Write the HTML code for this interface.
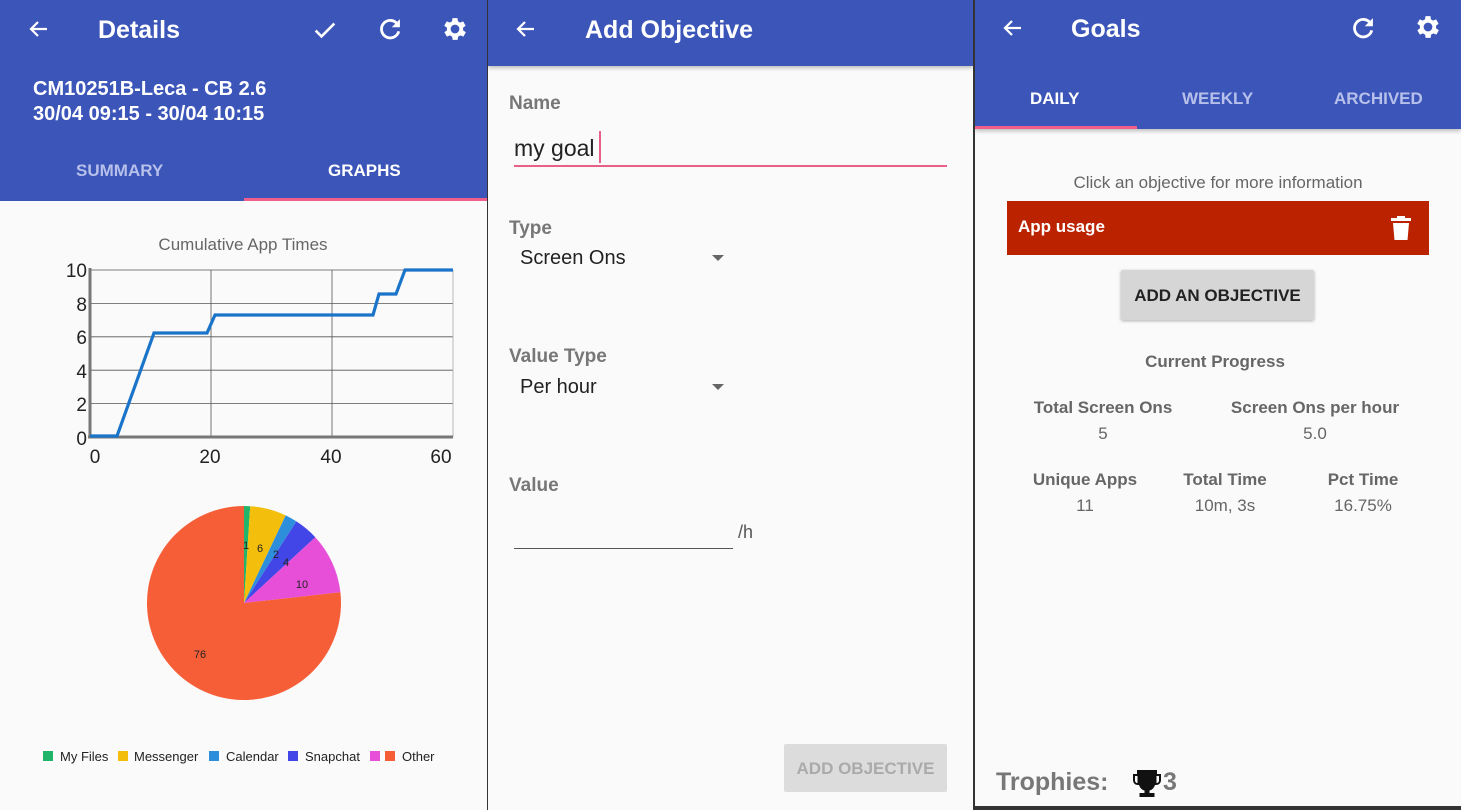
<!DOCTYPE html>
<html><head><meta charset="utf-8"><style>
*{margin:0;padding:0;box-sizing:border-box}
body{width:1461px;height:810px;background:#333;font-family:"Liberation Sans",Roboto,sans-serif;position:relative;overflow:hidden}
.p{position:absolute;top:0;height:810px;background:#fafafa;overflow:hidden}
.hd{position:absolute;left:0;right:0;top:0;background:#3c55b9;color:#fff}
.a{position:absolute}
.t{position:absolute;font-weight:bold;white-space:nowrap}
</style></head><body>

<!-- Panel 1 -->
<div class="p" style="left:0;width:487px">
 <div class="hd" style="height:201px">
  <svg class="a" style="left:26px;top:17px" width="26" height="24" viewBox="0 0 24 24"><path d="M20 12H5M11 5l-7 7 7 7" stroke="#fff" stroke-width="2.2" fill="none"/></svg>
  <div class="t" style="left:98px;top:16px;font-size:25px">Details</div>
  <svg class="a" style="left:311px;top:16px" width="28" height="28" viewBox="0 0 24 24"><path d="M4 12.5l5 5L20 6.5" stroke="#fff" stroke-width="2.2" fill="none"/></svg>
  <svg class="a" style="left:376px;top:15px" width="28" height="28" viewBox="0 0 24 24"><path d="M18.5 8A7.5 7.5 0 1 0 19.5 14" stroke="#fff" stroke-width="2.4" fill="none"/><path d="M20.5 3.5v7h-7z" fill="#fff"/></svg>
  <svg class="a" style="left:440px;top:14px" width="30" height="30" viewBox="0 0 24 24"><path fill="#fff" d="M19.4 13a7.5 7.5 0 0 0 0-2l2.1-1.6-2-3.5-2.5 1a7 7 0 0 0-1.7-1L15 3.3h-4l-.4 2.6a7 7 0 0 0-1.7 1l-2.5-1-2 3.5L6.6 11a7.5 7.5 0 0 0 0 2l-2.1 1.6 2 3.5 2.5-1a7 7 0 0 0 1.7 1l.4 2.6h4l.4-2.6a7 7 0 0 0 1.7-1l2.5 1 2-3.5zM13 15.5a3.5 3.5 0 1 1 0-7 3.5 3.5 0 0 1 0 7z" transform="translate(-1 0)"/></svg>
  <div class="t" style="left:33px;top:77px;font-size:20px;line-height:25px">CM10251B-Leca - CB 2.6<br>30/04 09:15 - 30/04 10:15</div>
  <div class="t" style="left:76px;top:161px;font-size:17px;color:#b6c0ea">SUMMARY</div>
  <div class="t" style="left:328px;top:161px;font-size:17px">GRAPHS</div>
  <div class="a" style="left:244px;top:198px;width:243px;height:3px;background:#ef5f8a"></div>
 </div>
 <svg class="a" style="left:0;top:201px" width="487" height="609">
  <g transform="translate(0,-201)" font-family="Liberation Sans, sans-serif">
   <text x="243" y="250" font-size="17" fill="#666" text-anchor="middle">Cumulative App Times</text>
   <g stroke="#555" stroke-width="0.8">
    <line x1="90" y1="270" x2="453" y2="270"/><line x1="90" y1="303.4" x2="453" y2="303.4"/><line x1="90" y1="336.8" x2="453" y2="336.8"/><line x1="90" y1="370.2" x2="453" y2="370.2"/><line x1="90" y1="403.6" x2="453" y2="403.6"/>
    <line x1="211" y1="270" x2="211" y2="437"/><line x1="332" y1="270" x2="332" y2="437"/><line x1="453" y1="270" x2="453" y2="437" stroke="#aaa"/>
   </g>
   <line x1="90" y1="268" x2="90" y2="438" stroke="#777" stroke-width="3"/>
   <line x1="88" y1="437" x2="453" y2="437" stroke="#777" stroke-width="3"/>
   <polyline points="90,436 117,436 154,333 207,333 215,315 373,315 379,294 396,294 405,270 453,270" fill="none" stroke="#1a74c9" stroke-width="3.2"/>
   <g font-size="19" fill="#222" text-anchor="end">
    <text x="87" y="277">10</text><text x="87" y="311">8</text><text x="87" y="344">6</text><text x="87" y="378">4</text><text x="87" y="411">2</text><text x="87" y="445">0</text>
   </g>
   <g font-size="19" fill="#222" text-anchor="middle">
    <text x="95" y="463">0</text><text x="210" y="463">20</text><text x="331" y="463">40</text><text x="441" y="463">60</text>
   </g>
   <path d="M244 603L244 506A97 97 0 0 1 250.2 506.2Z" fill="#20b56b"/>
   <path d="M244 603L250.2 506.2A97 97 0 0 1 285.7 515.4Z" fill="#f4bf0c"/>
   <path d="M244 603L285.7 515.4A97 97 0 0 1 296.4 521.4Z" fill="#2d8fdc"/>
   <path d="M244 603L296.4 521.4A97 97 0 0 1 315.3 537.2Z" fill="#4246e6"/>
   <path d="M244 603L315.3 537.2A97 97 0 0 1 340.4 592.3Z" fill="#e84fd8"/>
   <path d="M244 603L340.4 592.3A97 97 0 1 1 244 506Z" fill="#f65e38"/>
   <g font-size="11" fill="#222" text-anchor="middle">
    <text x="246" y="549">1</text><text x="260" y="552">6</text><text x="276" y="558">2</text><text x="286" y="566">4</text><text x="302" y="588">10</text><text x="200" y="658">76</text>
   </g>
   <g font-size="13" fill="#222">
    <rect x="43" y="751" width="10" height="10" fill="#20b56b"/><text x="60" y="761">My Files</text>
    <rect x="118" y="751" width="10" height="10" fill="#f4bf0c"/><text x="134" y="761">Messenger</text>
    <rect x="209" y="751" width="10" height="10" fill="#2d8fdc"/><text x="226" y="761">Calendar</text>
    <rect x="288" y="751" width="10" height="10" fill="#4246e6"/><text x="305" y="761">Snapchat</text>
    <rect x="370" y="751" width="10" height="10" fill="#e84fd8"/>
    <rect x="385" y="751" width="10" height="10" fill="#f65e38"/><text x="402" y="761">Other</text>
   </g>
  </g>
 </svg>
</div>

<!-- Panel 2 -->
<div class="p" style="left:488px;width:485px">
 <div class="hd" style="height:66px;box-shadow:0 2px 4px rgba(0,0,0,.25)">
  <svg class="a" style="left:25px;top:17px" width="26" height="24" viewBox="0 0 24 24"><path d="M20 12H5M11 5l-7 7 7 7" stroke="#fff" stroke-width="2.2" fill="none"/></svg>
  <div class="t" style="left:97px;top:16px;font-size:25px">Add Objective</div>
 </div>
 <div class="t" style="left:21px;top:93px;font-size:19px;color:#777">Name</div>
 <div class="a" style="left:26px;top:135px;font-size:23px;color:#222">my goal</div>
 <div class="a" style="left:111px;top:131px;width:2px;height:32px;background:#e85f87"></div>
 <div class="a" style="left:26px;top:165px;width:433px;height:2px;background:#e85f87"></div>
 <div class="t" style="left:21px;top:218px;font-size:19px;color:#777">Type</div>
 <div class="a" style="left:32px;top:247px;font-size:20px;color:#222">Screen Ons</div>
 <div class="a" style="left:224px;top:255px;border:6px solid transparent;border-top:6px solid #666;border-bottom:0"></div>
 <div class="t" style="left:21px;top:346px;font-size:19px;color:#777">Value Type</div>
 <div class="a" style="left:32px;top:376px;font-size:20px;color:#222">Per hour</div>
 <div class="a" style="left:224px;top:384px;border:6px solid transparent;border-top:6px solid #666;border-bottom:0"></div>
 <div class="t" style="left:21px;top:475px;font-size:19px;color:#777">Value</div>
 <div class="a" style="left:26px;top:548px;width:219px;height:1px;background:#555"></div>
 <div class="a" style="left:250px;top:522px;font-size:18px;color:#555">/h</div>
 <div class="a" style="left:296px;top:744px;width:163px;height:48px;background:#dcdcdc;border-radius:2px;color:#aaa;font-size:17px;font-weight:bold;text-align:center;line-height:50px">ADD OBJECTIVE</div>
</div>

<!-- Panel 3 -->
<div class="p" style="left:975px;width:486px;height:806px">
 <div class="hd" style="height:129px;box-shadow:0 2px 4px rgba(0,0,0,.25)">
  <svg class="a" style="left:25px;top:16px" width="26" height="24" viewBox="0 0 24 24"><path d="M20 12H5M11 5l-7 7 7 7" stroke="#fff" stroke-width="2.2" fill="none"/></svg>
  <div class="t" style="left:96px;top:15px;font-size:25px">Goals</div>
  <svg class="a" style="left:374px;top:14px" width="28" height="28" viewBox="0 0 24 24"><path d="M18.5 8A7.5 7.5 0 1 0 19.5 14" stroke="#fff" stroke-width="2.4" fill="none"/><path d="M20.5 3.5v7h-7z" fill="#fff"/></svg>
  <svg class="a" style="left:438px;top:12px" width="30" height="30" viewBox="0 0 24 24"><path fill="#fff" d="M19.4 13a7.5 7.5 0 0 0 0-2l2.1-1.6-2-3.5-2.5 1a7 7 0 0 0-1.7-1L15 3.3h-4l-.4 2.6a7 7 0 0 0-1.7 1l-2.5-1-2 3.5L6.6 11a7.5 7.5 0 0 0 0 2l-2.1 1.6 2 3.5 2.5-1a7 7 0 0 0 1.7 1l.4 2.6h4l.4-2.6a7 7 0 0 0 1.7-1l2.5 1 2-3.5zM13 15.5a3.5 3.5 0 1 1 0-7 3.5 3.5 0 0 1 0 7z" transform="translate(-1 0)"/></svg>
  <div class="t" style="left:55px;top:89px;font-size:17px">DAILY</div>
  <div class="t" style="left:207px;top:89px;font-size:17px;color:#b6c0ea">WEEKLY</div>
  <div class="t" style="left:359px;top:89px;font-size:17px;color:#b6c0ea">ARCHIVED</div>
  <div class="a" style="left:0;top:126px;width:162px;height:3px;background:#ef5f8a"></div>
 </div>
 <div class="a" style="left:0;width:486px;top:173px;text-align:center;font-size:17px;color:#666">Click an objective for more information</div>
 <div class="a" style="left:32px;top:201px;width:422px;height:54px;background:#bb2200"></div>
 <div class="t" style="left:43px;top:217px;font-size:17px;color:#fff">App usage</div>
 <svg class="a" style="left:414px;top:215px" width="24" height="26" viewBox="0 0 24 26"><rect x="2" y="3" width="20" height="3" fill="#fff"/><rect x="8" y="1" width="8" height="3" fill="#fff"/><path d="M4 8h16l-1.5 17h-13z" fill="#fff"/></svg>
 <div class="a" style="left:146px;top:270px;width:193px;height:50px;background:#d6d6d6;box-shadow:0 1px 3px rgba(0,0,0,.3);border-radius:2px;text-align:center;line-height:51px;font-size:17px;font-weight:bold;color:#222">ADD AN OBJECTIVE</div>
 <div class="t" style="left:-3px;width:486px;text-align:center;top:352px;font-size:17px;color:#666">Current Progress</div>
 <div class="t" style="left:28px;width:200px;text-align:center;top:398px;font-size:17px;color:#666">Total Screen Ons</div>
 <div class="a" style="left:28px;width:200px;text-align:center;top:424px;font-size:17px;color:#666">5</div>
 <div class="t" style="left:240px;width:200px;text-align:center;top:398px;font-size:17px;color:#666">Screen Ons per hour</div>
 <div class="a" style="left:240px;width:200px;text-align:center;top:424px;font-size:17px;color:#666">5.0</div>
 <div class="t" style="left:40px;width:140px;text-align:center;top:470px;font-size:17px;color:#666">Unique Apps</div>
 <div class="a" style="left:40px;width:140px;text-align:center;top:496px;font-size:17px;color:#666">11</div>
 <div class="t" style="left:180px;width:140px;text-align:center;top:470px;font-size:17px;color:#666">Total Time</div>
 <div class="a" style="left:180px;width:140px;text-align:center;top:496px;font-size:17px;color:#666">10m, 3s</div>
 <div class="t" style="left:318px;width:140px;text-align:center;top:470px;font-size:17px;color:#666">Pct Time</div>
 <div class="a" style="left:318px;width:140px;text-align:center;top:496px;font-size:17px;color:#666">16.75%</div>
 <div class="t" style="left:21px;top:768px;font-size:25px;color:#777">Trophies:</div>
 <svg class="a" style="left:157px;top:768px" width="30" height="30" viewBox="0 0 30 30"><path d="M5 2h20v4h4v6c0 3-2 5-5 5h-1c-1 3-3 5-5.5 5.5V25h5v4H7.5v-4h5v-2.5C10 22 8 20 7 17H6c-3 0-5-2-5-5V6h4zM3 8v4c0 2 1 3 2.5 3V8zM27 8h-2.5v7C26 15 27 14 27 12z" fill="#111"/></svg>
 <div class="t" style="left:188px;top:768px;font-size:25px;color:#777">3</div>
</div>
</body></html>
